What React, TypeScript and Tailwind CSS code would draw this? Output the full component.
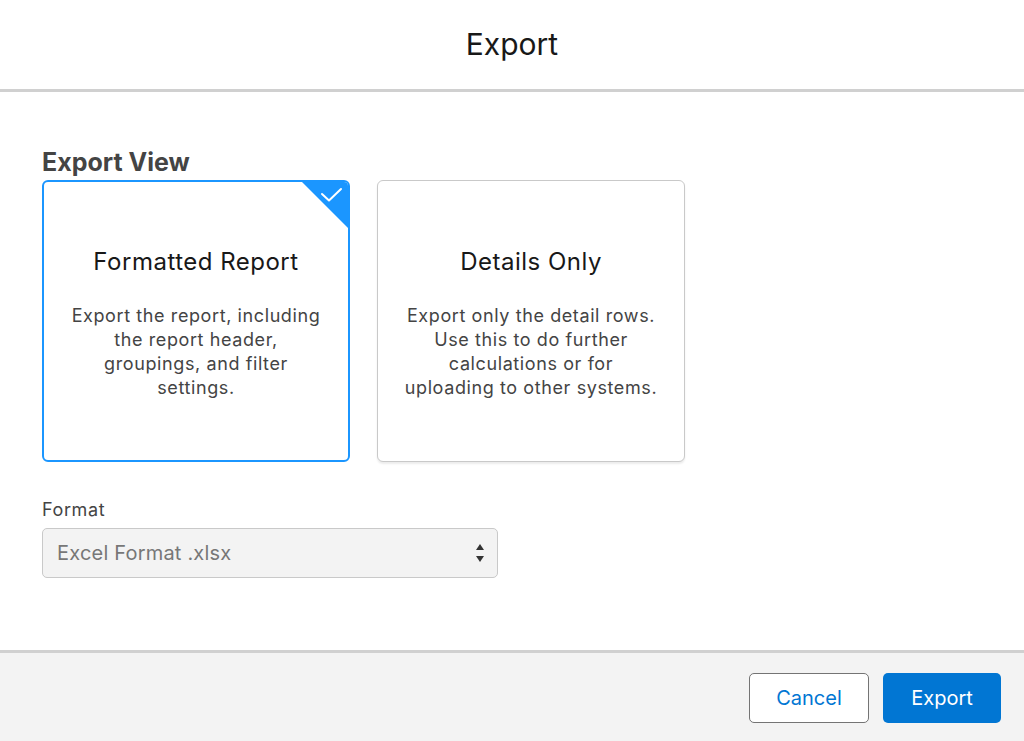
import React from 'react';

const FONT = { fontFamily: 'Inter, "Noto Sans", "Liberation Sans", sans-serif' };

interface OptionProps {
  title: string;
  lines: string[];
  selected?: boolean;
}

function ViewOption({ title, lines, selected }: OptionProps) {
  return (
    <div
      className={`relative w-[308px] h-[282px] rounded-md overflow-hidden flex flex-col items-center justify-center bg-white ${
        selected
          ? 'border-2 border-[#1b96ff]'
          : 'border border-[#c9c9c9] shadow-[0_2px_2px_rgba(0,0,0,0.08)]'
      }`}
    >
      {selected && (
        <svg className="absolute top-0 right-0" width="46" height="46" viewBox="0 0 46 46">
          <polygon points="0,0 46,0 46,46" fill="#1b96ff" />
          <polyline
            points="20,12 27,18.5 39,7"
            fill="none"
            stroke="#fff"
            strokeWidth="2"
            strokeLinecap="round"
            strokeLinejoin="round"
          />
        </svg>
      )}
      <p className="text-[24px] leading-[30px] tracking-[0.5px] text-[#181818] mt-[4px]">{title}</p>
      <div className="mt-[27px] text-[18px] leading-[24px] tracking-[0.6px] text-[#444] text-center">
        {lines.map(l => (
          <p key={l}>{l}</p>
        ))}
      </div>
    </div>
  );
}

export default function App() {
  return (
    <div className="h-[741px] w-[1024px] flex flex-col bg-white overflow-hidden" style={FONT}>
      {/* Header */}
      <div className="h-[92px] shrink-0 flex items-center justify-center border-b-[3px] border-[#d0d0d0]">
        <h1 className="text-[30px] text-[#181818]">Export</h1>
      </div>

      {/* Body */}
      <div className="flex-1 px-[42px] pt-[55px]">
        <h2 className="text-[25px] leading-[30px] font-bold text-[#444] mb-[3px]">Export View</h2>
        <div className="flex gap-[27px]">
          <ViewOption
            selected
            title="Formatted Report"
            lines={['Export the report, including', 'the report header,', 'groupings, and filter', 'settings.']}
          />
          <ViewOption
            title="Details Only"
            lines={['Export only the detail rows.', 'Use this to do further', 'calculations or for', 'uploading to other systems.']}
          />
        </div>

        <p className="mt-[36px] text-[18px] leading-[24px] tracking-[0.6px] text-[#444]">Format</p>
        <div className="mt-[6px] w-[456px] h-[50px] rounded-[5px] border border-[#c9c9c9] bg-[#f3f3f3] flex items-center justify-between pl-[14px] pr-[12px]">
          <span className="text-[20px] tracking-[0.2px] text-[#777]">Excel Format .xlsx</span>
          <svg width="10" height="26" viewBox="0 0 10 26">
            <polygon points="5,4 9,10 1,10" fill="#333" />
            <polygon points="1,16 9,16 5,22" fill="#333" />
          </svg>
        </div>
      </div>

      {/* Footer */}
      <div className="h-[91px] shrink-0 bg-[#f3f3f3] border-t-[3px] border-[#d0d0d0] flex items-start justify-end gap-[14px] pt-[20px] pr-[23px]">
        <button className="w-[120px] h-[50px] rounded-[5px] border border-[#747474] bg-white text-[20px] text-[#0176d3]">
          Cancel
        </button>
        <button className="w-[118px] h-[50px] rounded-[5px] bg-[#0176d3] text-[20px] text-white">
          Export
        </button>
      </div>
    </div>
  );
}
